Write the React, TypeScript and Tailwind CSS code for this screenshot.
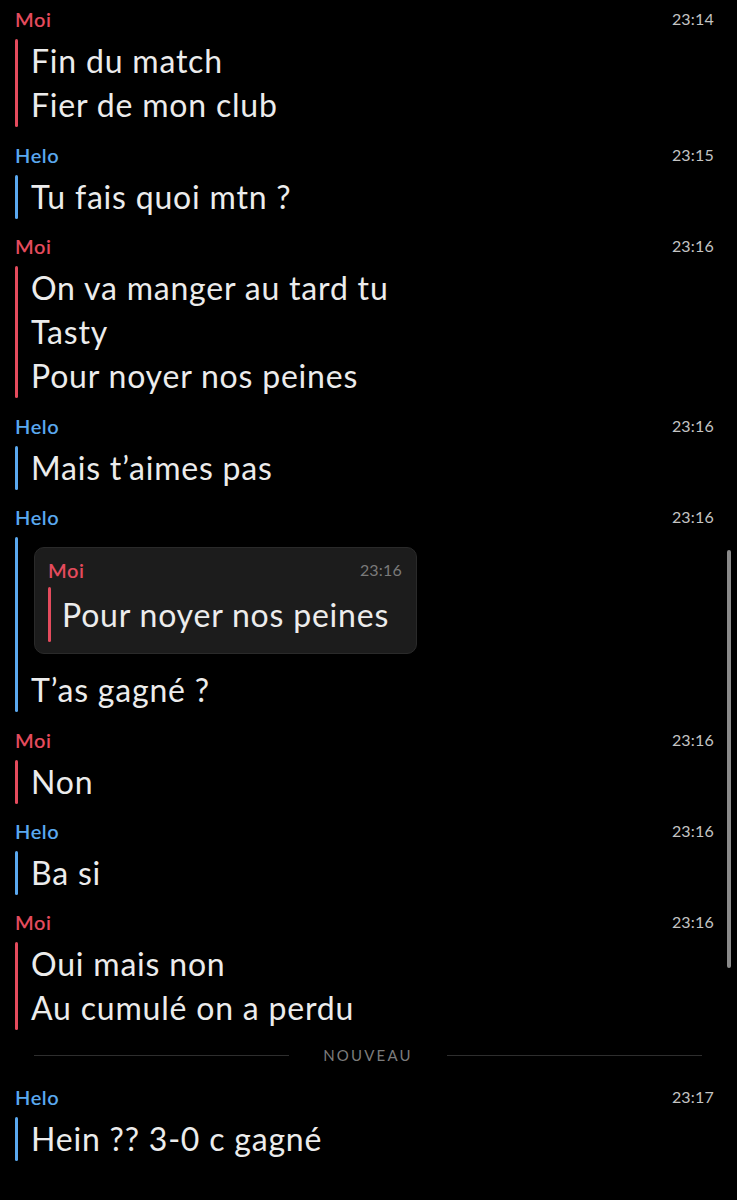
import React from "react";

type Who = "Moi" | "Helo";

const nameColor: Record<Who, string> = {
  Moi: "text-[#e44b5d]",
  Helo: "text-[#5aa8ef]",
};
const barColor: Record<Who, string> = {
  Moi: "bg-[#e44b5d]",
  Helo: "bg-[#5aa8ef]",
};

function Header({ who, time }: { who: Who; time: string }) {
  return (
    <div className="flex h-5 items-center justify-between">
      <span className={`text-[20px] font-semibold leading-5 tracking-[0.6px] ${nameColor[who]}`}>{who}</span>
      <span className="text-[16px] leading-5 tracking-[0.2px] text-[#c4c4c4]">{time}</span>
    </div>
  );
}

function Block({
  who,
  time,
  lines,
  children,
  pad = "pb-[17px]",
}: {
  who: Who;
  time: string;
  lines?: string[];
  children?: React.ReactNode;
  pad?: string;
}) {
  return (
    <div className={pad}>
      <Header who={who} time={time} />
      <div className="mt-[10px] flex">
        <div className={`w-[3px] shrink-0 rounded-full ${barColor[who]}`} />
        <div className="flex-1 pl-[13px]">
          {children}
          {lines?.map((l, i) => (
            <div key={i} className="text-[32px] leading-[44px] tracking-[0.8px] text-[#ececec]">
              {l}
            </div>
          ))}
        </div>
      </div>
    </div>
  );
}

export default function App() {
  return (
    <div
      className="relative min-h-[1200px] w-[737px] bg-black pl-[15px] pr-[23px] pt-[9px]"
      style={{ fontFamily: "Lato, 'Noto Sans', sans-serif" }}
    >
      <Block who="Moi" time="23:14" lines={["Fin du match", "Fier de mon club"]} pad="pb-[18px]" />
      <Block who="Helo" time="23:15" lines={["Tu fais quoi mtn ?"]} />
      <Block
        who="Moi"
        time="23:16"
        lines={["On va manger au tard tu", "Tasty", "Pour noyer nos peines"]}
        pad="pb-[18px]"
      />
      <Block who="Helo" time="23:16" lines={["Mais t\u2019aimes pas"]} />
      <Block who="Helo" time="23:16" lines={["T\u2019as gagné ?"]} pad="pb-[18px]">
        <div className="mb-[14px] ml-[3px] mt-[10px] w-[383px] rounded-[10px] border border-[#2a2a2a] bg-[#1c1c1c] pb-[11px] pl-[13px] pr-[14px] pt-[12px]">
          <div className="flex h-5 items-center justify-between">
            <span className="text-[20px] font-semibold leading-5 tracking-[0.6px] text-[#e44b5d]">Moi</span>
            <span className="text-[16px] leading-5 tracking-[0.2px] text-[#7a7a7a]">23:16</span>
          </div>
          <div className="mt-[7px] flex">
            <div className="w-[3px] shrink-0 rounded-full bg-[#e44b5d]" />
            <div className="pl-[11px] text-[32px] leading-[55px] tracking-[0.8px] text-[#ececec]">
              Pour noyer nos peines
            </div>
          </div>
        </div>
      </Block>
      <Block who="Moi" time="23:16" lines={["Non"]} />
      <Block who="Helo" time="23:16" lines={["Ba si"]} />
      <Block who="Moi" time="23:16" lines={["Oui mais non", "Au cumulé on a perdu"]} pad="pb-[16px]" />

      <div className="flex h-[18px] items-center gap-[34px] pl-[19px] pr-[12px]">
        <div className="h-px flex-1 bg-[#2e2e2e]" />
        <span className="text-[15px] tracking-[2.2px] text-[#7c7c7c]">NOUVEAU</span>
        <div className="h-px flex-1 bg-[#2e2e2e]" />
      </div>
      <div className="pt-[23px]">
        <Block who="Helo" time="23:17" lines={["Hein ?? 3-0 c gagné"]} />
      </div>

      <div className="absolute right-[6px] top-[550px] h-[418px] w-[4px] rounded-full bg-[#8a8a8a]" />
    </div>
  );
}
